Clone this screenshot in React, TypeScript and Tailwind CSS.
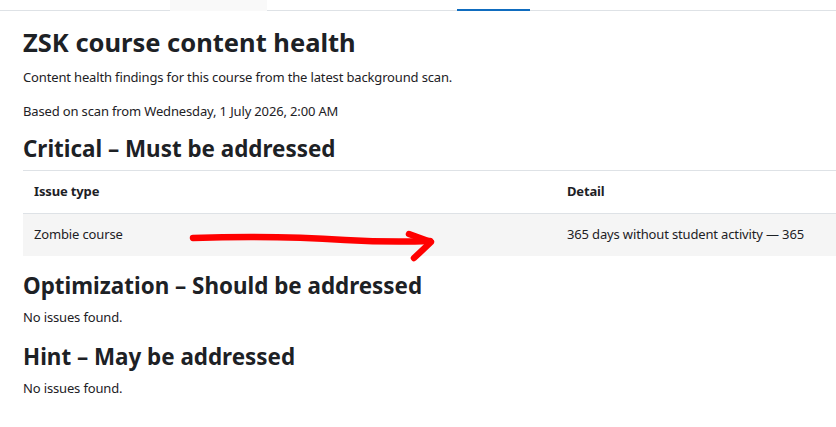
import React from "react";

const font = { fontFamily: '"Noto Sans", "Open Sans", sans-serif' };

function TopNav() {
  return (
    <div className="flex h-[11px]">
      <div className="w-[170px] border-b border-[#dee2e6]" />
      <div className="w-[97px] bg-[#f9f9f9]" />
      <div className="w-[190px] border-b border-[#dee2e6]" />
      <div className="w-[73px] border-b-2 border-[#0f6cbf]" />
      <div className="flex-1 border-b border-[#dee2e6]" />
    </div>
  );
}

function Arrow() {
  return (
    <svg
      className="pointer-events-none absolute left-0 top-0"
      width="836"
      height="427"
      viewBox="0 0 836 427"
    >
      <g fill="none" stroke="#ff0000" strokeWidth="6.5" strokeLinecap="round" strokeLinejoin="round">
        <path d="M193 238 C250 236 300 237 345 240 C380 242 405 242 430 241" />
        <path d="M409 234 L431 242 L414 258" />
      </g>
    </svg>
  );
}

export default function App() {
  return (
    <div className="relative min-h-[427px] w-full overflow-hidden bg-white text-[#1d2125]" style={font}>
      <TopNav />
      <main className="pl-[23px]">
        <h2 className="mt-[15px] text-[25.5px] font-bold leading-[32px]">ZSK course content health</h2>
        <p className="mt-[10px] text-[13px] leading-[18px] tracking-[-0.15px]">
          Content health findings for this course from the latest background scan.
        </p>
        <p className="mt-[16px] text-[13px] leading-[18px] tracking-[-0.15px]">
          Based on scan from Wednesday, 1 July 2026, 2:00 AM
        </p>
        <h3 className="mt-[15px] text-[22.4px] font-bold leading-[28px]">Critical – Must be addressed</h3>
        <table className="mt-[7px] w-full border-collapse text-[13px] tracking-[-0.15px]">
          <thead>
            <tr className="border-t border-b border-[#dee2e6]">
              <th className="h-[43px] w-[544px] pl-[11px] text-left font-bold">Issue type</th>
              <th className="h-[43px] text-left font-bold">Detail</th>
            </tr>
          </thead>
          <tbody>
            <tr className="bg-[#f5f5f5]">
              <td className="h-[42px] pl-[11px]">Zombie course</td>
              <td className="h-[42px]">365 days without student activity — 365</td>
            </tr>
          </tbody>
        </table>
        <h3 className="mt-[16px] text-[22.4px] font-bold leading-[28px]">Optimization – Should be addressed</h3>
        <p className="mt-[8px] text-[13px] leading-[18px] tracking-[-0.15px]">No issues found.</p>
        <h3 className="mt-[17px] text-[22.4px] font-bold leading-[28px]">Hint – May be addressed</h3>
        <p className="mt-[8px] text-[13px] leading-[18px] tracking-[-0.15px]">No issues found.</p>
      </main>
      <Arrow />
    </div>
  );
}
